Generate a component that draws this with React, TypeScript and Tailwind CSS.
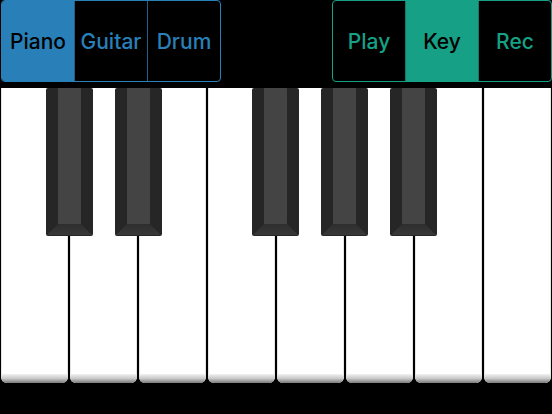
import React from "react";

const BLACK_KEYS = ["left-[46px]", "left-[115px]", "left-[252px]", "left-[321px]", "left-[390px]"];

function BlackKey({ pos }: { pos: string }) {
  return (
    <svg className={`absolute top-0 ${pos}`} width="47" height="148" viewBox="0 0 47 148">
      <defs>
        <linearGradient id="bevel" x1="0" y1="0" x2="0" y2="1">
          <stop offset="0" stopColor="#2e2e2e" />
          <stop offset="1" stopColor="#383838" />
        </linearGradient>
      </defs>
      <rect x="0" y="0" width="47" height="148" rx="2" fill="#262626" />
      <rect x="12" y="0" width="23" height="136" rx="1" fill="#444444" />
      <polygon points="12,136 35,136 46,147 1,147" fill="url(#bevel)" />
    </svg>
  );
}

function Segment({
  items,
  active,
  color,
}: {
  items: string[];
  active: number;
  color: "blue" | "green";
}) {
  const border = color === "blue" ? "border-[#2980b9]" : "border-[#16a085]";
  const divider = color === "blue" ? "border-[#1f5f8a]" : "border-[#127a66]";
  const fill = color === "blue" ? "bg-[#2980b9]" : "bg-[#16a085]";
  const text = color === "blue" ? "text-[#2980b9]" : "text-[#16a085]";
  return (
    <div className={`flex h-[82px] w-[220px] overflow-hidden rounded-[4px] border ${border}`}>
      {items.map((label, i) => (
        <div
          key={label}
          className={`flex flex-1 items-center justify-center pt-[1px] text-[21px] font-medium ${
            i > 0 ? `border-l ${divider}` : ""
          } ${i === active ? `${fill} text-black` : text}`}
        >
          {label}
        </div>
      ))}
    </div>
  );
}

export default function App() {
  return (
    <div
      className="flex h-[414px] w-[552px] flex-col bg-black"
      style={{ fontFamily: "Inter, 'Noto Sans', 'Liberation Sans', sans-serif" }}
    >
      <div className="flex h-[88px] items-start justify-between pl-[1px]">
        <Segment items={["Piano", "Guitar", "Drum"]} active={0} color="blue" />
        <Segment items={["Play", "Key", "Rec"]} active={1} color="green" />
      </div>

      <div className="relative flex h-[295px] gap-[2px] px-[1px]">
        {Array.from({ length: 8 }).map((_, i) => (
          <div key={i} className="flex flex-1 flex-col overflow-hidden rounded-b-[6px] bg-white">
            <div className="flex-1 border-x border-[#e4e4e4] bg-white" />
            <div className="h-[9px] bg-linear-to-b from-[#f2f2f2] via-[#c8c8c8] to-[#7a7a7a]" />
          </div>
        ))}
        {BLACK_KEYS.map((pos) => (
          <BlackKey key={pos} pos={pos} />
        ))}
      </div>
    </div>
  );
}
